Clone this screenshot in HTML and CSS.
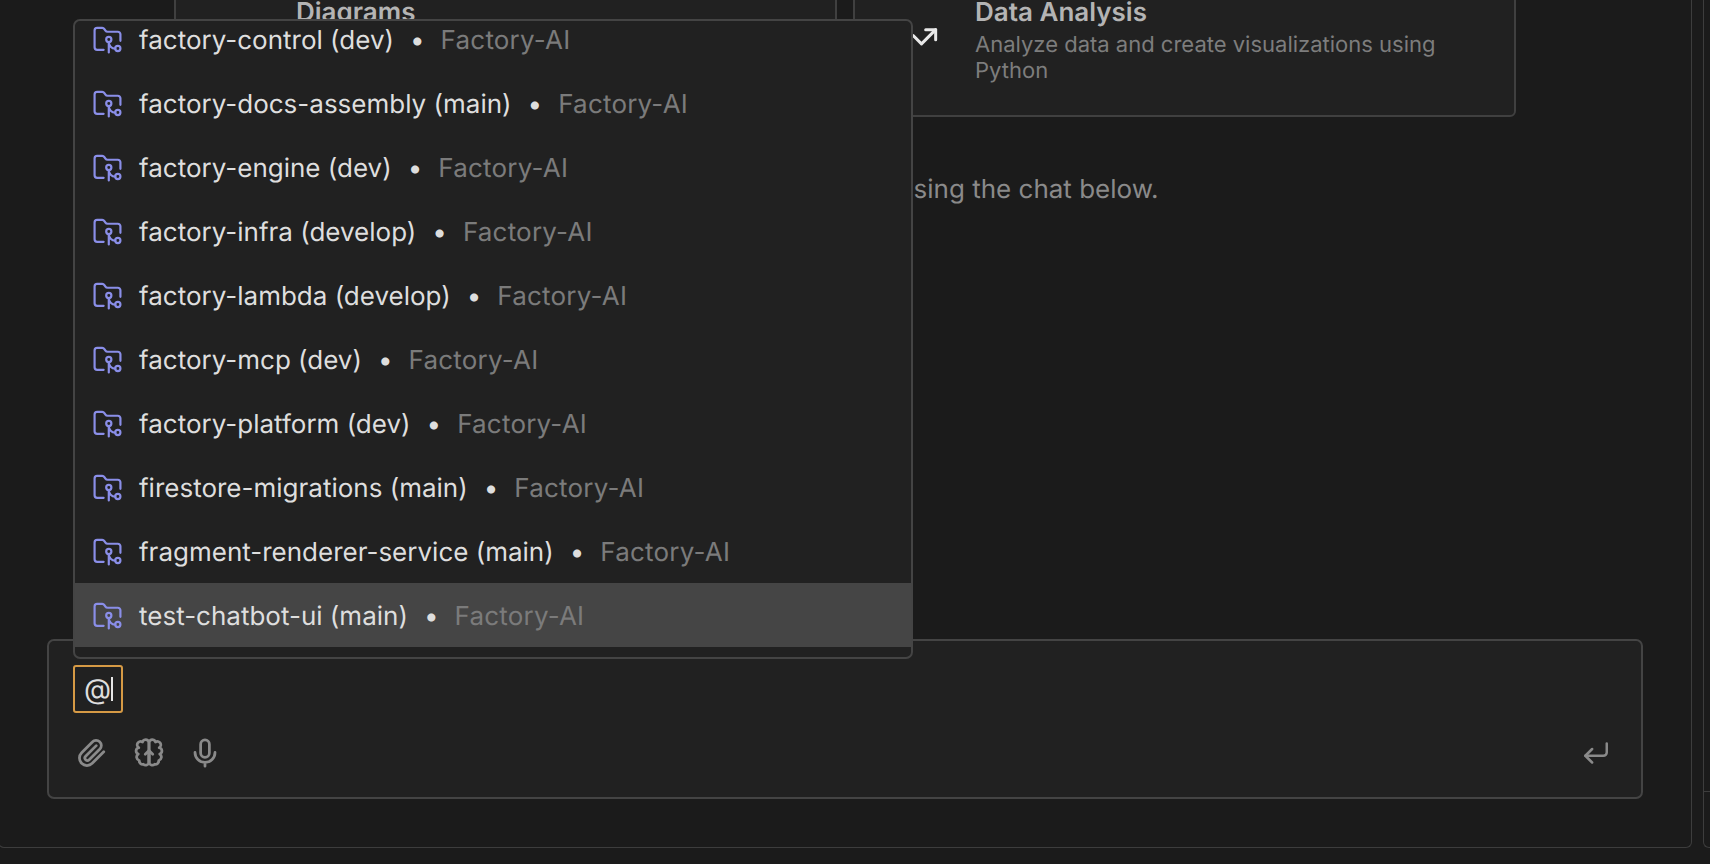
FILE: index.html
```html
<!DOCTYPE html>
<html lang="en">
<head>
    <meta charset="UTF-8">
    <meta name="viewport" content="width=device-width, initial-scale=1.0">
    <title>Factory chat</title>
    <link rel="stylesheet" href="styles.css">
</head>
<body>
    <svg class="icon-defs" width="0" height="0" aria-hidden="true">
        <symbol id="folder-git" viewBox="0 0 24 24">
            <path d="M9 20H4a2 2 0 0 1-2-2V5a2 2 0 0 1 2-2h3.9a2 2 0 0 1 1.69.9l.81 1.2a2 2 0 0 0 1.67.9H20a2 2 0 0 1 2 2v5"/>
            <circle cx="13" cy="12" r="2"/>
            <path d="M18 19c-2.8 0-5-2.2-5-5v8"/>
            <circle cx="20" cy="19" r="2"/>
        </symbol>
    </svg>

    <main class="main-panel">
        <section class="cards">
            <article class="card">
                <div class="card-text">
                    <h3 class="card-title card-title-center">Diagrams</h3>
                </div>
            </article>
            <article class="card card-data">
                <svg class="card-icon" viewBox="0 0 24 24">
                    <polyline points="22 7 13.5 15.5 8.5 10.5 2 17"/>
                    <polyline points="16 7 22 7 22 13"/>
                </svg>
                <div class="card-text">
                    <h3 class="card-title">Data Analysis</h3>
                    <p class="card-desc">Analyze data and create visualizations using Python</p>
                </div>
            </article>
        </section>

        <p class="note">Start a session using the chat below.</p>

        <form class="chat-box">
            <div class="mention-chip">@<span class="caret"></span></div>
            <div class="chat-tools">
                <svg class="tool-icon" viewBox="0 0 24 24">
                    <path d="M21.4 11.05l-9.2 9.2a6 6 0 0 1-8.49-8.49l8.57-8.57A4 4 0 1 1 18.34 8.85l-8.6 8.57a2 2 0 0 1-2.83-2.83l8.49-8.48"/>
                </svg>
                <svg class="tool-icon" viewBox="0 0 24 24">
                    <path d="M12 5A2.700 2.700 0 0 0 6.800 3.200 2.600 2.600 0 0 0 3.800 7.800 2.600 2.600 0 0 0 3.400 12.800 2.900 2.900 0 0 0 4.200 18 2.800 2.800 0 0 0 7.500 21 2.700 2.700 0 0 0 12 19.500z"/>
                    <path d="M12 5A2.700 2.700 0 0 1 17.200 3.200 2.600 2.600 0 0 1 20.200 7.800 2.600 2.600 0 0 1 20.600 12.800 2.900 2.900 0 0 1 19.800 18 2.800 2.800 0 0 1 16.500 21 2.700 2.700 0 0 1 12 19.500z"/>
                    <path d="M12 10v9.500M9 13l3-3 3 3"/>
                </svg>
                <svg class="tool-icon tool-mic" viewBox="0 0 24 24">
                    <rect x="8.500" y="1.500" width="7" height="14" rx="3.500"/>
                    <path d="M4 11.500a8 8 0 0 0 16 0M12 19.500v3"/>
                </svg>
                <svg class="tool-icon send-icon" viewBox="0 0 24 24">
                    <path d="M22 3v8a3 3 0 0 1-3 3H3"/>
                    <path d="M9 8l-6 6 6 6"/>
                </svg>
            </div>
        </form>

        <div class="repo-menu">
            <ul class="repo-list">
                <li class="repo-row"><svg class="repo-icon"><use href="#folder-git"/></svg><span class="repo-name">factory-control (dev)</span><span class="repo-dot">•</span><span class="repo-org">Factory-AI</span></li>
                <li class="repo-row"><svg class="repo-icon"><use href="#folder-git"/></svg><span class="repo-name">factory-docs-assembly (main)</span><span class="repo-dot">•</span><span class="repo-org">Factory-AI</span></li>
                <li class="repo-row"><svg class="repo-icon"><use href="#folder-git"/></svg><span class="repo-name">factory-engine (dev)</span><span class="repo-dot">•</span><span class="repo-org">Factory-AI</span></li>
                <li class="repo-row"><svg class="repo-icon"><use href="#folder-git"/></svg><span class="repo-name">factory-infra (develop)</span><span class="repo-dot">•</span><span class="repo-org">Factory-AI</span></li>
                <li class="repo-row"><svg class="repo-icon"><use href="#folder-git"/></svg><span class="repo-name">factory-lambda (develop)</span><span class="repo-dot">•</span><span class="repo-org">Factory-AI</span></li>
                <li class="repo-row"><svg class="repo-icon"><use href="#folder-git"/></svg><span class="repo-name">factory-mcp (dev)</span><span class="repo-dot">•</span><span class="repo-org">Factory-AI</span></li>
                <li class="repo-row"><svg class="repo-icon"><use href="#folder-git"/></svg><span class="repo-name">factory-platform (dev)</span><span class="repo-dot">•</span><span class="repo-org">Factory-AI</span></li>
                <li class="repo-row"><svg class="repo-icon"><use href="#folder-git"/></svg><span class="repo-name">firestore-migrations (main)</span><span class="repo-dot">•</span><span class="repo-org">Factory-AI</span></li>
                <li class="repo-row"><svg class="repo-icon"><use href="#folder-git"/></svg><span class="repo-name">fragment-renderer-service (main)</span><span class="repo-dot">•</span><span class="repo-org">Factory-AI</span></li>
                <li class="repo-row repo-row-active"><svg class="repo-icon"><use href="#folder-git"/></svg><span class="repo-name">test-chatbot-ui (main)</span><span class="repo-dot">•</span><span class="repo-org">Factory-AI</span></li>
            </ul>
        </div>
    </main>

    <aside class="side-panel">
        <div class="side-top"></div>
        <div class="side-bottom"></div>
    </aside>
</body>
</html>
```

FILE: styles.css
```css
body {
    font-family: 'Inter', 'Liberation Sans', sans-serif;
    text-rendering: geometricPrecision;
    margin: 0;
    height: 864px;
    box-sizing: border-box;
    padding-bottom: 16px;
    display: flex;
    overflow: hidden;
    background-color: #1b1b1b;
    color: #dedede;
}

.icon-defs {
    position: absolute;
}

svg {
    fill: none;
    stroke: currentColor;
    stroke-linecap: round;
    stroke-linejoin: round;
}

/* main panel runs off the left edge */
.main-panel {
    position: relative;
    flex: none;
    width: 1694px;
    margin-left: -2px;
    box-sizing: border-box;
    display: flex;
    flex-direction: column;
    border-right: 1px solid #3d3d3d;
    border-bottom: 1px solid #3d3d3d;
    border-left: 1px solid #3d3d3d;
    border-radius: 0 0 6px 6px;
}

.side-panel {
    flex: 1;
    margin-left: 11px;
    display: flex;
    flex-direction: column;
    border-left: 1px solid #3d3d3d;
    border-bottom: 1px solid #3d3d3d;
    border-radius: 0 0 0 6px;
}

.side-top {
    height: 791px;
    border-bottom: 1px solid #3d3d3d;
}

.cards {
    display: grid;
    grid-template-columns: 663px 663px;
    gap: 16px;
    margin: -40px 0 0 175px;
}

.card {
    display: flex;
    height: 157px;
    box-sizing: border-box;
    padding: 40px 60px 0 44px;
    gap: 36px;
    background-color: #212121;
    border: 2px solid #404040;
    border-radius: 6px;
}

.card-icon {
    flex: none;
    width: 40px;
    height: 40px;
    margin-top: 16px;
    stroke-width: 1.8;
    color: #e8e8e8;
}

.card-title {
    margin: -4px 0 0;
    font-size: 26px;
    line-height: 30px;
    font-weight: 600;
    color: #b4b4b4;
}

.card-title-center {
    margin-left: 76px;
}

.card-desc {
    margin: 4px 0 0;
    max-width: 480px;
    font-size: 22px;
    line-height: 26px;
    color: #7d7d7d;
}

.note {
    margin: 58px 0 0;
    text-align: center;
    padding-left: 178px;
    font-size: 26px;
    line-height: 30px;
    color: #8a8a8a;
}

.chat-box {
    margin: auto 0 48px 48px;
    width: 1596px;
    height: 160px;
    box-sizing: border-box;
    padding: 24px 24px 0;
    background-color: #212121;
    border: 2px solid #444;
    border-radius: 7px;
}

.mention-chip {
    width: 50px;
    height: 48px;
    box-sizing: border-box;
    padding-left: 9px;
    display: flex;
    align-items: center;
    font-size: 28px;
    border: 2px solid #d69a45;
    border-radius: 3px;
}

.caret {
    width: 2px;
    height: 24px;
    background-color: #e6e6e6;
}

.chat-tools {
    display: flex;
    align-items: center;
    gap: 27px;
    margin-top: 25px;
    padding-left: 4px;
    color: #8a8a8a;
}

.tool-icon {
    flex: none;
    width: 30px;
    height: 30px;
    stroke-width: 2.2;
}

.tool-mic {
    margin-left: -1px;
}

.send-icon {
    width: 27px;
    height: 27px;
    margin-left: auto;
    margin-right: 8px;
}

/* the @ mention dropdown */
.repo-menu {
    position: absolute;
    left: 74px;
    top: 19px;
    width: 840px;
    height: 640px;
    box-sizing: border-box;
    overflow: hidden;
    background-color: #212121;
    border: 2px solid #444;
    border-radius: 7px;
}

.repo-list {
    list-style: none;
    margin: -14px 0 0;
    padding: 0;
}

.repo-row {
    display: flex;
    align-items: center;
    height: 64px;
    padding-left: 17px;
    font-size: 26px;
}

.repo-row span {
    margin-top: 2px;
}

.repo-row-active {
    background-color: #454545;
}

.repo-icon {
    flex: none;
    width: 31px;
    height: 31px;
    margin-right: 16px;
    stroke-width: 1.7;
    color: #8a8ee8;
}

.repo-row .repo-dot {
    margin-left: 16px;
    margin-right: 16px;
}

.repo-org {
    letter-spacing: 0.2px;
    color: #7b7b7b;
}
```
